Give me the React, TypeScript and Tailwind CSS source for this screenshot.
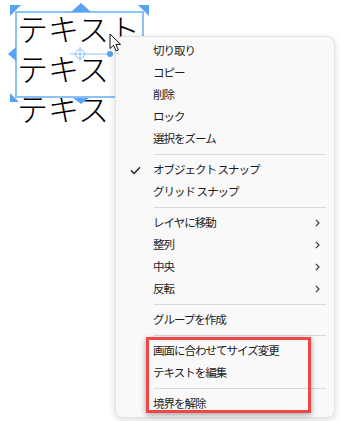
import React from 'react'

type Entry = { label?: string; checked?: boolean; sub?: boolean; sep?: boolean }

const entries: Entry[] = [
  { label: '切り取り' },
  { label: 'コピー' },
  { label: '削除' },
  { label: 'ロック' },
  { label: '選択をズーム' },
  { sep: true },
  { label: 'オブジェクト スナップ', checked: true },
  { label: 'グリッド スナップ' },
  { sep: true },
  { label: 'レイヤに移動', sub: true },
  { label: '整列', sub: true },
  { label: '中央', sub: true },
  { label: '反転', sub: true },
  { sep: true },
  { label: 'グループを作成' },
  { sep: true },
  { label: '画面に合わせてサイズ変更' },
  { label: 'テキストを編集' },
  { sep: true },
  { label: '境界を解除' },
]

function MenuRow({ e }: { e: Entry }) {
  if (e.sep) {
    return (
      <div className="h-[9px] flex items-center pl-[38px] pr-[8px]">
        <div className="h-px w-full bg-[#d9d9d9]" />
      </div>
    )
  }
  return (
    <div className="h-[22px] flex items-center relative">
      <div className="w-[37px] flex justify-center pl-[2px]">
        {e.checked && (
          <svg width="11" height="9" viewBox="0 0 11 9">
            <path d="M1 4.6 L4 7.5 L10 1.2" fill="none" stroke="#222" strokeWidth="1.4" />
          </svg>
        )}
      </div>
      <span className="flex-1 text-[11.5px] tracking-[-1px] text-[#1b1b1b] leading-none">{e.label}</span>
      {e.sub && (
        <svg width="5" height="8" viewBox="0 0 5 8" className="mr-[14px]">
          <path d="M1 0.8 L4 4 L1 7.2" fill="none" stroke="#333" strokeWidth="1.1" />
        </svg>
      )}
    </div>
  )
}

export default function App() {
  return (
    <div
      className="relative w-[340px] h-[421px] bg-white overflow-hidden"
      style={{ fontFamily: '"Noto Sans CJK JP", "Noto Sans", sans-serif' }}
    >
      {/* canvas text */}
      <div className="pl-[17px] pt-[8px] text-[31px] leading-[40px] text-black font-light whitespace-nowrap">
        <div>テキスト</div>
        <div>テキスト</div>
        <div>テキスト</div>
      </div>

      {/* selection overlay */}
      <svg className="absolute left-0 top-0" width="160" height="110" viewBox="0 0 160 110">
        <rect x="16" y="12" width="127" height="85" fill="none" stroke="#8cc2f7" strokeWidth="2" />
        <path d="M10 5 L21 5 L10 16 Z" fill="#5aa3f2" />
        <path d="M149 5 L138 5 L149 16 Z" fill="#5aa3f2" />
        <path d="M81 3 L91 12 L71 12 Z" fill="#5aa3f2" />
        <path d="M8 54 L16 47 L16 61 Z" fill="#5aa3f2" />
        <path d="M10 93 L10 102 L19 102 Z" fill="#5aa3f2" />
        <path d="M73 98 L89 98 L81 104 Z" fill="#5aa3f2" />
        <line x1="70" y1="54" x2="110" y2="54" stroke="#8cc2f7" strokeWidth="1" />
        <line x1="80" y1="47" x2="80" y2="61" stroke="#8cc2f7" strokeWidth="1" />
        <circle cx="80" cy="54" r="4.5" fill="none" stroke="#8cc2f7" strokeWidth="1" />
        <circle cx="110" cy="54" r="3" fill="#5aa3f2" />
      </svg>

      {/* context menu */}
      <div className="absolute left-[115px] top-[36px] w-[220px] pt-[3px] pb-[2px] bg-[#f9f9f9] border border-[#e3e3e3] rounded-[8px] shadow-[0_2px_8px_rgba(0,0,0,0.14)]">
        {entries.map((e, i) => (
          <MenuRow key={i} e={e} />
        ))}
        <div className="absolute left-[30px] top-[300px] w-[165px] h-[76px] border-[3px] border-[#f04646] shadow-[0_2px_6px_rgba(0,0,0,0.35)]" />
      </div>

      {/* mouse cursor */}
      <svg className="absolute left-[109px] top-[33px]" width="14" height="20" viewBox="0 0 14 20">
        <path
          d="M1 1 L1 15.5 L4.5 12.3 L7.2 18 L9.4 17 L6.8 11.4 L11.6 11.4 Z"
          fill="#fff"
          stroke="#111"
          strokeWidth="1"
          strokeLinejoin="round"
        />
      </svg>
    </div>
  )
}
